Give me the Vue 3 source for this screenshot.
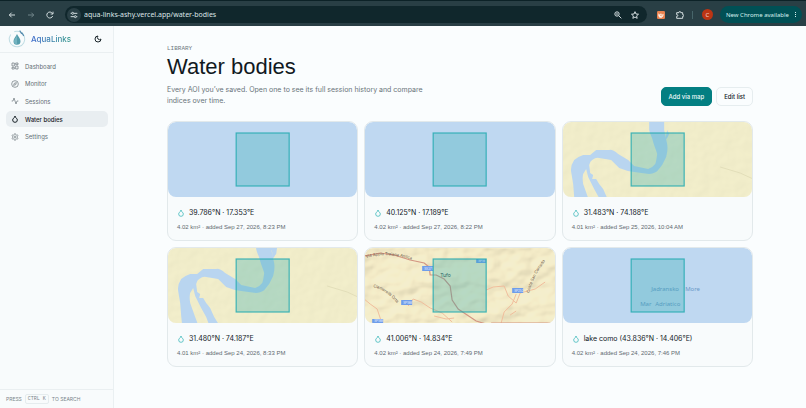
<script setup>
import { ref } from 'vue'

const address = ref('aqua-links-ashy.vercel.app/water-bodies')

const nav = [
  {
    label: 'Dashboard',
    shapes: ['M3 3h7v9H3z', 'M14 3h7v5h-7z', 'M14 12h7v9h-7z', 'M3 16h7v5H3z'],
  },
  {
    label: 'Monitor',
    shapes: ['M12 2a10 10 0 1 0 0 20a10 10 0 1 0 0-20z', 'M16.2 7.8l-2.1 6.3-6.3 2.1 2.1-6.3z'],
  },
  { label: 'Sessions', shapes: ['M22 12h-4l-3 9L9 3l-3 9H2'] },
  {
    label: 'Water bodies',
    active: true,
    shapes: ['M12 22a7 7 0 0 0 7-7c0-2-1-3.900-3-5.500s-3.500-4-4-6.500c-.5 2.500-2 4.900-4 6.500C6 11.100 5 13 5 15a7 7 0 0 0 7 7z'],
  },
  {
    label: 'Settings',
    shapes: [
      'M12.2 2h-.4a2 2 0 0 0-2 2v.2a2 2 0 0 1-1 1.700l-.4.3a2 2 0 0 1-2 0l-.2-.1a2 2 0 0 0-2.700.7l-.2.4a2 2 0 0 0 .7 2.700l.2.1a2 2 0 0 1 1 1.700v.5a2 2 0 0 1-1 1.800l-.2.1a2 2 0 0 0-.7 2.700l.2.4a2 2 0 0 0 2.700.7l.2-.1a2 2 0 0 1 2 0l.4.3a2 2 0 0 1 1 1.700v.2a2 2 0 0 0 2 2h.4a2 2 0 0 0 2-2v-.2a2 2 0 0 1 1-1.700l.4-.3a2 2 0 0 1 2 0l.2.1a2 2 0 0 0 2.700-.7l.2-.4a2 2 0 0 0-.7-2.700l-.2-.1a2 2 0 0 1-1-1.800v-.5a2 2 0 0 1 1-1.700l.2-.1a2 2 0 0 0 .7-2.700l-.2-.4a2 2 0 0 0-2.700-.7l-.2.1a2 2 0 0 1-2 0l-.4-.3a2 2 0 0 1-1-1.700V4a2 2 0 0 0-2-2z',
      'M12 9a3 3 0 1 0 0 6a3 3 0 1 0 0-6z',
    ],
  },
]

const bodies = [
  { name: '39.786°N · 17.353°E', meta: '4.02 km² · added Sep 27, 2026, 8:23 PM', map: 'sea' },
  { name: '40.125°N · 17.189°E', meta: '4.02 km² · added Sep 27, 2026, 8:22 PM', map: 'sea' },
  { name: '31.483°N · 74.188°E', meta: '4.01 km² · added Sep 25, 2026, 10:04 AM', map: 'river', shift: 'translate(0 0)' },
  { name: '31.480°N · 74.187°E', meta: '4.01 km² · added Sep 24, 2026, 8:33 PM', map: 'river', shift: 'translate(2 -7)' },
  { name: '41.006°N · 14.834°E', meta: '4.02 km² · added Sep 24, 2026, 7:49 PM', map: 'hills' },
  { name: 'lake como (43.836°N · 14.406°E)', meta: '4.02 km² · added Sep 24, 2026, 7:46 PM', map: 'adriatic' },
]
</script>

<template>
  <div class="window">
    <header class="browser">
      <button class="tool" aria-label="Back">
        <svg viewBox="0 0 24 24"><path d="M21 12H4M11 5l-7 7 7 7" /></svg>
      </button>
      <button class="tool dim" aria-label="Forward">
        <svg viewBox="0 0 24 24"><path d="M3 12h17M13 5l7 7-7 7" /></svg>
      </button>
      <button class="tool" aria-label="Reload">
        <svg viewBox="0 0 24 24"><path d="M20 15a9 9 0 1 1-1-8l2 2M21 2v7h-7" /></svg>
      </button>
      <div class="address">
        <button class="site" aria-label="Site information">
          <svg viewBox="0 0 24 24"><path d="M2 7h3M12 7h10M2 17h10M19 17h3" /><circle cx="8" cy="7" r="3" /><circle cx="16" cy="17" r="3" /></svg>
        </button>
        <input v-model="address" class="url" type="text" aria-label="Address" />
        <button class="tool" aria-label="Zoom">
          <svg viewBox="0 0 24 24"><circle cx="9" cy="9" r="6.500" /><path d="M14 14l8 8M6 9h6" /></svg>
        </button>
        <button class="tool star" aria-label="Bookmark">
          <svg viewBox="0 0 24 24"><path d="M12 2l3 7 7.500.7-5.700 5 1.700 7.300-6.500-3.900L5.500 22l1.700-7.300-5.700-5L9 9z" /></svg>
        </button>
      </div>
      <button class="tool addon" aria-label="Extension">
        <svg viewBox="0 0 24 24"><rect x="0" y="0" width="24" height="24" rx="4" fill="#e9824f" stroke="none" /><path d="M4 7l5 4 3-5 2 5 6-3-1 7-5 5H8l-4-5z" fill="#fff1e7" stroke="none" /><path d="M9 12l4 3 4-4" stroke="#e9824f" stroke-width="2" /></svg>
      </button>
      <button class="tool puzzle" aria-label="Extensions">
        <svg viewBox="0 0 24 24"><path d="M2 5h7V4a2.500 2.500 0 0 1 5 0v1h6v6h1a2.500 2.500 0 0 1 0 5h-1v6H2v-6h1a2.500 2.500 0 0 0 0-5H2z" /></svg>
      </button>
      <span class="rule"></span>
      <button class="profile" aria-label="Profile">C</button>
      <button class="update">New Chrome available <span class="dots"><i></i><i></i><i></i></span></button>
    </header>

    <div class="app">
      <aside class="sidebar">
        <div class="brand">
          <svg class="logo" viewBox="0 0 36 36">
            <circle cx="18" cy="18" r="15.500" fill="none" stroke="#bfdce3" stroke-width="2" stroke-dasharray="62 9" transform="rotate(-15 18 18)" />
            <path d="M24 2l3 5M28 6l3 5" stroke="#568cae" stroke-width="2.500" stroke-linecap="round" />
            <path d="M18 8c2 5 7 9 7 14.500a7 7 0 0 1-14 0C11 17 16 13 18 8z" fill="#559dac" />
            <path d="M18 10v19c-4 0-6-3-6-6 0-5 5-8 6-13z" fill="#73b3c0" />
          </svg>
          <span class="name">AquaLinks</span>
          <button class="theme" aria-label="Toggle theme">
            <svg viewBox="0 0 24 24"><path d="M12 3a6 6 0 0 0 9 9 9 9 0 1 1-9-9z" /></svg>
          </button>
        </div>
        <nav class="nav">
          <a v-for="item in nav" :key="item.label" href="#" class="link" :class="{ active: item.active }">
            <svg viewBox="0 0 24 24"><path v-for="d in item.shapes" :key="d" :d="d" /></svg>
            {{ item.label }}
          </a>
        </nav>
        <div class="hint">PRESS <kbd>CTRL K</kbd> TO SEARCH</div>
      </aside>

      <main class="main">
        <div class="heading">
          <div class="intro">
            <p class="eyebrow">LIBRARY</p>
            <h1>Water bodies</h1>
            <p class="lead">Every AOI you’ve saved. Open one to see its full session history and compare indices over time.</p>
          </div>
          <div class="actions">
            <button class="btn primary">Add via map</button>
            <button class="btn">Edit list</button>
          </div>
        </div>

        <section class="grid">
          <article v-for="(body, i) in bodies" :key="body.name" class="card">
            <svg class="map" viewBox="0 0 191 75" preserveAspectRatio="xMidYMid slice" aria-hidden="true">
              <rect v-if="body.map === 'sea' || body.map === 'adriatic'" width="191" height="75" fill="#bfd8f1" />

              <template v-if="body.map === 'river'">
                <filter :id="'sand' + i" x="0" y="0" width="100%" height="100%">
                  <feTurbulence type="fractalNoise" baseFrequency=".09" numOctaves="2" :seed="i" />
                  <feDiffuseLighting surfaceScale=".7" lighting-color="#fff7d1" diffuseConstant="1.150">
                    <feDistantLight azimuth="225" elevation="55" />
                  </feDiffuseLighting>
                </filter>
                <rect width="191" height="75" fill="#eeebc8" />
                <rect width="191" height="75" :filter="`url(#sand${i})`" opacity=".25" />
                <g :transform="body.shift">
                  <path
                    d="M87-2L87 8C88 13 90 15 91 20C92 24 94 28 95 32Q94 40 93 42Q90 46 86 47L72 44L66 38L56 32Q50 27 47 28L34 28L28 33L21 33Q15 35 12 38Q8 44 9 50L11 62L12 75L13 84L29 84L26 76L21 62Q20 56 21 52L24 47L26 55Q29 61 32 67L37 76L40 84H50L45 76L41 67L37 62L34 57L30 57L31 53L28 51L27 43Q28 39 30 38Q34 35 37 36L49 38L57 46Q64 49 72 50L87 52Q94 51 96 48L100 43L104 35Q106 28 105 22L102 8L102-2z"
                    fill="#b9d5f0"
                  />
                  <path d="M105 8L107 12 105 16 103 18 104 13z" fill="#b9d5f0" />
                  <path v-if="i === 3" d="M101 7L108 6 107 13 103 16 103 11z" fill="#b9d5f0" />
                  <path d="M158 45L168 48 178 51 191 57" fill="none" stroke="#e2deb9" stroke-width="1" />
                </g>
              </template>

              <template v-if="body.map === 'hills'">
                <filter id="relief" x="0" y="0" width="100%" height="100%">
                  <feTurbulence type="fractalNoise" baseFrequency=".03 .04" numOctaves="3" seed="12" />
                  <feDiffuseLighting surfaceScale="6" lighting-color="#fff6d6" diffuseConstant="1.250">
                    <feDistantLight azimuth="225" elevation="55" />
                  </feDiffuseLighting>
                </filter>
                <rect width="191" height="75" fill="#eee5bf" />
                <rect width="191" height="75" filter="url(#relief)" opacity=".34" />
                <g fill="none" stroke="#f0bd9c" stroke-width="1">
                  <path d="M0 51l6 5 7 5 4 12M44 58l5-7 8 3 9 6 12 5 10 9M70 68l12 3 8-1M122 42l7-3 11-1 4 10 8 7 4-10 15-4 10-7M152 46l-4 10-8 8-3 11M152 63l-6 4" />
                </g>
                <g fill="none" stroke="#d39582" stroke-width="1.200">
                  <path d="M0 8l16-3 14 2 16 5 14 3 5 4 1 8 6 0 8 4 6 7 2 14 6 9 9 6 9 6 10 3M127 75h60" />
                </g>
                <path id="roadA" d="M2 10Q28 2 62 17" fill="none" />
                <path id="roadB" d="M9 39Q24 42 38 62" fill="none" />
                <path id="roadC" d="M165 45Q170 24 190 2" fill="none" />
                <g class="road">
                  <text><textPath href="#roadA">Via Appia Traiana Antica</textPath></text>
                  <text><textPath href="#roadB">Ciamarella Orta</textPath></text>
                  <text><textPath href="#roadC">Costa San Corrado</textPath></text>
                </g>
                <text class="town" x="76" y="29">Tufo</text>
                <g fill="#6f9dea">
                  <rect x="58" y="18" width="11" height="5" /><rect x="112" y="11" width="10" height="4" />
                  <rect x="37" y="52" width="11" height="5" /><rect x="8" y="71" width="11" height="5" />
                  <rect x="148" y="40" width="11" height="5" />
                </g>
                <g class="shield">
                  <text x="60" y="22">SS371</text><text x="114" y="14">SP16</text><text x="39" y="56">SP188</text>
                  <text x="10" y="74">SP188</text><text x="150" y="44">SP252</text>
                </g>
              </template>

              <g v-if="body.map === 'adriatic'" class="sea-label">
                <text x="89" y="43">Jadransko</text>
                <text x="123" y="43">More</text>
                <text x="78" y="58">Mar</text>
                <text x="93" y="58">Adriatico</text>
              </g>
              <rect x="69" y="11" width="53" height="53" fill="#2caab0" fill-opacity=".3" stroke="#25aab2" stroke-opacity=".85" stroke-width="1.200" />
            </svg>
            <div class="info">
              <h2>
                <svg viewBox="0 0 24 24"><path d="M12 22a7 7 0 0 0 7-7c0-2-1-3.900-3-5.500s-3.500-4-4-6.500c-.5 2.500-2 4.900-4 6.500C6 11.100 5 13 5 15a7 7 0 0 0 7 7z" /></svg>
                {{ body.name }}
              </h2>
              <p>{{ body.meta }}</p>
            </div>
          </article>
        </section>
      </main>
    </div>
  </div>
</template>

<style>
body {
  background: #fafdfe;
}
</style>

<style scoped>
* {
  box-sizing: border-box;
}
.window {
  min-height: 100vh;
  display: flex;
  flex-direction: column;
  font-family: Inter, "Liberation Sans", sans-serif;
  font-size: 6px;
  color: #11191e;
}
button {
  font: inherit;
  color: inherit;
  border: 0;
  padding: 0;
  background: none;
}
svg {
  display: block;
}
h1,
h2,
p {
  margin: 0;
  font-weight: 400;
}
.browser {
  height: 26px;
  padding: 2px 4px 0 8px;
  display: flex;
  align-items: center;
  background: #293f45;
  border-top: 1px solid #0c2227;
  color: #d3dddf;
  font-family: "Noto Sans", sans-serif;
}
.tool svg {
  width: 8px;
  height: 8px;
  fill: none;
  stroke: currentColor;
  stroke-width: 3;
}
.browser > .tool {
  margin-right: 11px;
}
.browser > .puzzle {
  margin-right: 8px;
}
.dim {
  color: #71858a;
}
.address {
  flex: 1;
  height: 17px;
  display: flex;
  align-items: center;
  gap: 9px;
  padding: 0 8px 0 2px;
  margin-right: 10px;
  border-radius: 9px;
  background: #10272c;
}
.site {
  width: 14px;
  height: 14px;
  display: grid;
  place-items: center;
  border-radius: 50%;
  background: #293f45;
}
.site svg {
  width: 8px;
  fill: none;
  stroke: currentColor;
  stroke-width: 3;
}
.url {
  flex: 1;
  min-width: 0;
  margin-left: -6px;
  padding: 0;
  border: 0;
  outline: 0;
  background: none;
  color: #dce5e6;
  font: 7px "Noto Sans", sans-serif;
}
.rule {
  width: 1px;
  height: 8px;
  margin-right: 9px;
  background: #47656a;
}
.profile {
  width: 11px;
  height: 11px;
  margin-right: 7px;
  border-radius: 50%;
  background: #bd3514;
  color: #f6ddd5;
}
.update {
  height: 17px;
  display: flex;
  align-items: center;
  gap: 6px;
  padding: 0 6px;
  border-radius: 9px;
  background: #005055;
  color: #d5f0ef;
}
.dots {
  display: grid;
  gap: 1px;
}
.dots i {
  width: 1px;
  height: 1px;
  background: currentColor;
}
.app {
  flex: 1;
  display: grid;
  grid-template-columns: 114px 1fr;
}
.sidebar {
  display: flex;
  flex-direction: column;
  border-right: 1px solid #eaf0f2;
  background: #f8fbfc;
}
.brand {
  height: 27px;
  display: flex;
  align-items: center;
  padding: 0 11px 0 8px;
  border-bottom: 1px solid #eaeff1;
}
.logo {
  width: 18px;
  height: 18px;
}
.name {
  flex: 1;
  margin-left: 5px;
  background: linear-gradient(90deg, #3b68cb, #32948d 38px);
  background-clip: text;
  color: transparent;
  font-size: 8px;
  font-weight: 500;
}
.theme svg {
  width: 8px;
  fill: none;
  stroke: #1c272c;
  stroke-width: 3;
}
.nav {
  min-height: 87px;
  display: grid;
  gap: 1px;
  margin: 5px 5px 0 6px;
}
.link {
  display: flex;
  align-items: center;
  gap: 6px;
  padding: 0 5px;
  border-radius: 5px;
  color: #636e74;
  text-decoration: none;
}
.link svg {
  width: 8px;
  height: 8px;
  fill: none;
  stroke: currentColor;
  stroke-width: 2;
}
.active {
  background: #e9eef1;
  color: #182126;
  font-weight: 500;
}
.active svg {
  stroke-width: 3;
}
.hint {
  margin-top: auto;
  height: 19px;
  display: flex;
  align-items: center;
  gap: 3px;
  padding: 0 6px;
  border-top: 1px solid #eaeff1;
  color: #7a858a;
  font-size: 5px;
}
kbd {
  padding: 1px 2px;
  border: 1px solid #e5ecee;
  border-radius: 2px;
  font: 5px "Liberation Mono", monospace;
}
.main {
  min-width: 0;
  padding: 19px 53px 40px 53px;
}
.heading {
  display: flex;
  justify-content: space-between;
  align-items: flex-end;
  margin-bottom: 15px;
}
.eyebrow {
  color: #6e797e;
  font: 6px/7px "Liberation Mono", monospace;
}
h1 {
  font-family: "Liberation Sans", sans-serif;
  font-size: 22px;
  line-height: 30px;
}
.lead {
  max-width: 276px;
  margin-top: 2px;
  color: #69747a;
  font-size: 7px;
  line-height: 11px;
}
.actions {
  display: flex;
  gap: 4px;
}
.btn {
  height: 19px;
  padding: 0 7px;
  border: 1px solid #e6edef;
  border-radius: 5px;
  font-weight: 500;
}
.primary {
  border-color: #037f82;
  background: #037f82;
  color: #edfafa;
}
.grid {
  display: grid;
  grid-template-columns: repeat(3, minmax(0, 1fr));
  gap: 6px;
}
.card {
  overflow: hidden;
  border: 1px solid #e2e9eb;
  border-radius: 9px;
  background: #f8fbfc;
}
.map {
  width: 100%;
  height: 75px;
  border-radius: 8px;
}
.info {
  padding: 10px 9px 9px;
}
h2 {
  display: flex;
  align-items: center;
  gap: 4px;
  font-size: 7px;
  line-height: 12px;
}
h2 svg {
  width: 8px;
  height: 8px;
  fill: none;
  stroke: #1eaeb1;
  stroke-width: 2;
}
.info p {
  margin-top: 4px;
  color: #5f6a70;
  font: 6px/8px "Liberation Sans", sans-serif;
}
.road {
  fill: #6d5646;
  font-size: 4px;
}
.town {
  fill: #28473f;
  font-size: 5px;
}
.shield {
  fill: #eaf1ff;
  font-size: 3px;
}
.sea-label {
  fill: #6a98c8;
  font-size: 6px;
  font-family: "Noto Sans", sans-serif;
}
</style>
